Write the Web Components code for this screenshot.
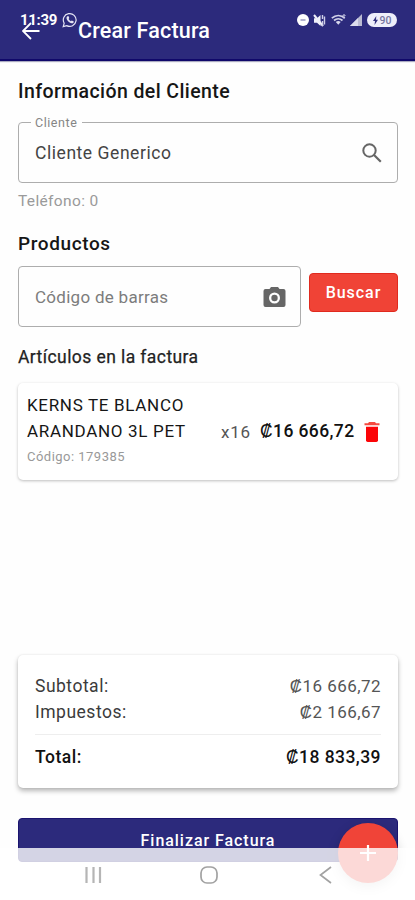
<!DOCTYPE html>
<html lang="es"><head><meta charset="utf-8"><title>Crear Factura</title>
<style>
html,body{margin:0;height:100%}
body{background:#fefefe;font-family:Roboto,"Liberation Sans",sans-serif;overflow:hidden}
</style></head><body>
<invoice-screen></invoice-screen>
<script>
const define=(name,html)=>customElements.define(name,class extends HTMLElement{
  constructor(){super();this.attachShadow({mode:'open'}).innerHTML=html;}
});

define('status-bar',`<style>
:host{display:flex;align-items:center;height:20px;color:#fff;box-sizing:border-box;padding:0 18px 0 20px}
.time{font-size:15px;font-weight:700;line-height:20px;letter-spacing:-.3px;width:38px;white-space:nowrap}
.wa{margin-left:4px}.sp{flex:1}
.bat{display:flex;align-items:center;justify-content:center;gap:2px;width:30px;height:14px;border-radius:7px;background:#eeeefa;color:#77769f;font-size:10.500px;font-weight:500;margin-left:4px}
svg{display:block}
</style>
<span class="time">11:39</span>
<svg class="wa" width="16" height="16" viewBox="0 0 16 16"><path d="M1.2 14.6l1-3.4a6.4 6.4 0 1 1 2.5 2.4z" fill="none" stroke="#e4e4f4" stroke-width="1.2"/><path d="M5.4 4.300l1-.2.9 2-.7.9c.5 1 1.300 1.700 2.300 2.200l.9-.8 2 1c0 1.300-1 2-2.100 1.900C7 11 4.700 8.400 4.500 6.100c0-.8.4-1.400.9-1.800z" fill="#e4e4f4"/></svg>
<span class="sp"></span>
<svg width="12" height="12" viewBox="0 0 12 12"><circle cx="6" cy="6" r="6" fill="#fff"/><path d="M3.500 6h5" stroke="#9a99c0" stroke-width="1.500"/></svg>
<svg style="margin-left:4px" width="13" height="13" viewBox="0 0 13 13"><path d="M1 4.300h3L7.500 1v11L4 8.800H1z" fill="#f0f0fa"/><path d="M1 1l9 11" stroke="#f0f0fa" stroke-width="2"/><path d="M9.500 1v4M9.500 7v5M11.500 2.500v8" fill="none" stroke="#cfcfe8" stroke-width="1.400"/></svg>
<svg style="margin-left:5px" width="15" height="12" viewBox="0 0 15 12"><path d="M.8 4.200c4-3.500 9-3.500 13 0M3 6.500c2.500-2.300 6-2.300 8.500 0" fill="none" stroke="#d0d0e8" stroke-width="1.700"/><path d="M4.800 8c1.600-1.300 3.300-1.300 4.900 0l-2.400 2.800z" fill="#d8d8ee"/><path d="M13 .5v4M11.500 2L13 .5 14.500 2" fill="none" stroke="#c5c5e2"/></svg>
<svg style="margin-left:4px" width="13" height="12" viewBox="0 0 13 12"><path d="M12 0v12H0z" fill="#babad2"/><path d="M8 4v8H0z" fill="#dcdceb"/></svg>
<span class="bat"><svg width="5" height="9" viewBox="0 0 5 9"><path d="M3.300 0L0 5h2L1.500 9 5 3.800H3z" fill="#33317f"/></svg>90</span>`);

define('app-header',`<style>
:host{display:block;position:relative;height:61px;box-sizing:border-box;background:#2c2a7c;border-bottom:2px solid #10086a;box-shadow:0 1px 1px #aaaac0;color:#fff}
.bar{display:flex;align-items:center;height:61px;padding-left:22px}
.title{margin-left:38px;font-size:21.500px;font-weight:500;line-height:28px;letter-spacing:.18px;white-space:nowrap}
status-bar{position:absolute;top:10px;left:0;right:0}
svg{display:block}
</style>
<div class="bar"><svg width="18" height="18" viewBox="0 0 18 18"><path d="M17.500 9H1.500M9 1L1 9l8 8" fill="none" stroke="#fff" stroke-width="1.800"/></svg><span class="title"><slot></slot></span></div>
<status-bar></status-bar>`);

define('outlined-field',`<style>
:host{display:flex;position:relative;align-items:center;justify-content:space-between;box-sizing:border-box;height:61px;border:1px solid #adadad;border-radius:4px;padding:0 15.500px 0 16px;font-size:17.500px;line-height:24px;letter-spacing:.55px;color:#444;white-space:nowrap}
:host([empty]){color:#7c7c7c;font-size:17px;letter-spacing:.28px;padding-right:14px}
::slotted(svg){display:block}
</style>
<slot name="label-box"></slot><span><slot></slot></span><slot name="icon"></slot>`);
define('field-label',`<style>:host{position:absolute;left:12px;top:-9px;padding:0 5px 0 4px;background:#fefefe;color:#858585;font-size:12.500px;line-height:17px;letter-spacing:.55px}</style><slot></slot>`);

define('app-button',`<style>
:host{display:flex;align-items:center;justify-content:center;box-sizing:border-box;border-radius:4px;color:#fff;font-weight:500;white-space:nowrap;background:var(--fill);border:1px solid var(--edge);height:var(--h);font-size:16px;letter-spacing:.95px}
</style><slot></slot>`);

define('invoice-item',`<style>
:host{display:flex;align-items:center;box-sizing:border-box;height:97px;border-radius:5px;background:#fff;box-shadow:0 1px 3px rgba(0,0,0,.26);padding:0 17px 0 9px}
.name{width:176px;font-size:17px;line-height:26px;letter-spacing:.68px;color:#161616;margin-right:18px;padding-bottom:1px}
.code{font-size:13px;line-height:26px;letter-spacing:.48px;color:#999}
.qty{font-size:17px;color:#555;letter-spacing:.7px;width:39px}
.price{font-size:17.500px;font-weight:500;color:#111;letter-spacing:.4px;white-space:nowrap;width:104px}
svg{display:block}
</style>
<div class="name"><slot name="name"></slot><div class="code"><slot name="code"></slot></div></div>
<span class="qty"><slot name="qty"></slot></span><span class="price"><slot name="price"></slot></span>
<svg width="16" height="20" viewBox="0 0 16 20"><path d="M5 0h6l1 1.300h3.500V3.300H.5V1.300H4z" fill="#f5493f"/><path d="M2 4.700h12V18.300Q14 20 12.300 20H3.700Q2 20 2 18.300z" fill="#fb0508"/></svg>`);

define('total-row',`<style>
:host{display:flex;justify-content:space-between;align-items:center;height:26px;font-size:17.500px;letter-spacing:.5px;color:#3b3b3b;white-space:nowrap}
:host([strong]){font-weight:500;color:#111;margin-top:9px;border-top:1px solid #eee;padding-top:9px}
.v{color:#555;font-size:17px;letter-spacing:.45px}:host([strong]) .v{color:#111;font-size:17.500px}
</style><span><slot></slot></span><span class="v"><slot name="value"></slot></span>`);

define('totals-card',`<style>
:host{display:block;box-sizing:border-box;height:133px;padding:18px 17px 0;border-radius:5px;background:#fff;box-shadow:0 3px 5px rgba(0,0,0,.28),0 0 2px rgba(0,0,0,.1)}
</style><slot></slot>`);

define('round-action',`<style>
:host{display:flex;align-items:center;justify-content:center;width:60px;height:60px;border-radius:50%;background:#f04438;box-shadow:0 4px 12px rgba(0,0,0,.2)}
</style><svg width="16" height="16" viewBox="0 0 16 16"><path d="M8 0v16M0 8h16" stroke="#fff" stroke-width="2.200"/></svg>`);

define('system-nav',`<style>
:host{display:flex;box-sizing:border-box;height:52px;background:rgba(255,255,255,.8);padding:18px 83px 0 84px;align-items:flex-start}
svg{display:block}svg:nth-of-type(2){margin-left:98px}svg:nth-of-type(3){margin-left:101px}
</style>
<svg width="18" height="18" viewBox="0 0 18 18"><path d="M2.500 1v16M9.500 1v16M16 1v16" stroke="#b5b5b5" stroke-width="2.200"/></svg>
<svg width="18" height="18" viewBox="0 0 18 18"><rect x="1" y="1" width="16" height="16" rx="6" fill="none" stroke="#a2a2a2" stroke-width="1.700"/></svg>
<svg width="13" height="18" viewBox="0 0 13 18"><path d="M12 1L1.500 9 12 17" fill="none" stroke="#a2a2a2" stroke-width="1.700"/></svg>`);

define('invoice-screen',`<style>
:host{display:block;position:relative;height:900px;overflow:hidden;background:#fefefe}
main{display:flex;flex-direction:column;padding:16px 17px 0 18px}
h2,h3{margin:0;font-weight:500;color:#161616;line-height:30px;white-space:nowrap}
.h1{font-size:19.500px;letter-spacing:.4px}
.h2{font-size:19px;letter-spacing:.6px}
.h3{font-size:17.500px;letter-spacing:.42px;margin-top:15px;color:#222;font-weight:400;-webkit-text-stroke:.25px #222}
.client{margin-top:15px}
.phone{font-size:15.500px;line-height:24px;letter-spacing:.35px;color:#9a9a9a;margin:6px 0 16px}
.scan{display:grid;grid-template-columns:283px 89px;gap:8px;margin-top:7px}
.scan app-button{margin-top:7px;--fill:#f04336;--edge:#e02a1e;--h:39px}
invoice-item{margin-top:11px}
totals-card{margin-top:175px}
.finish{margin-top:30px;--fill:#2c2a7c;--edge:#1b146f;--h:44px}
round-action{position:absolute;left:338px;top:823px}
system-nav{position:absolute;left:0;right:0;bottom:0}
</style>
<app-header>Crear Factura</app-header>
<main>
<h2 class="h1">Información del Cliente</h2>
<outlined-field class="client"><field-label slot="label-box">Cliente</field-label>Cliente Generico
<svg slot="icon" width="20" height="20" viewBox="0 0 20 20"><circle cx="7.500" cy="7.500" r="6.200" fill="none" stroke="#666" stroke-width="2"/><path d="M12 12l6.800 6.800" stroke="#666" stroke-width="2.200"/></svg></outlined-field>
<div class="phone">Teléfono: 0</div>
<h2 class="h2">Productos</h2>
<div class="scan"><outlined-field empty>Código de barras
<svg slot="icon" width="23" height="20" viewBox="0 0 23 20"><path fill-rule="evenodd" d="M2.500 2H6.500L8 0h7l1.500 2h4Q22.500 2 22.500 4V18Q22.500 20 20.500 20H2.500Q.5 20 .5 18V4Q.5 2 2.500 2zM11.500 5.500a5.500 5.500 0 1 0 0 11a5.500 5.500 0 1 0 0-11z" fill="#666"/><circle cx="11.500" cy="11" r="3.200" fill="#666"/></svg></outlined-field>
<app-button>Buscar</app-button></div>
<h3 class="h3">Artículos en la factura</h3>
<invoice-item><span slot="name">KERNS TE BLANCO ARANDANO 3L PET</span><span slot="code">Código: 179385</span><span slot="qty">x16</span><span slot="price">₡16 666,72</span></invoice-item>
<totals-card>
<total-row>Subtotal:<span slot="value">₡16 666,72</span></total-row>
<total-row>Impuestos:<span slot="value">₡2 166,67</span></total-row>
<total-row strong>Total:<span slot="value">₡18 833,39</span></total-row>
</totals-card>
<app-button class="finish">Finalizar Factura</app-button>
</main>
<round-action></round-action>
<system-nav></system-nav>`);
</script></body></html>
